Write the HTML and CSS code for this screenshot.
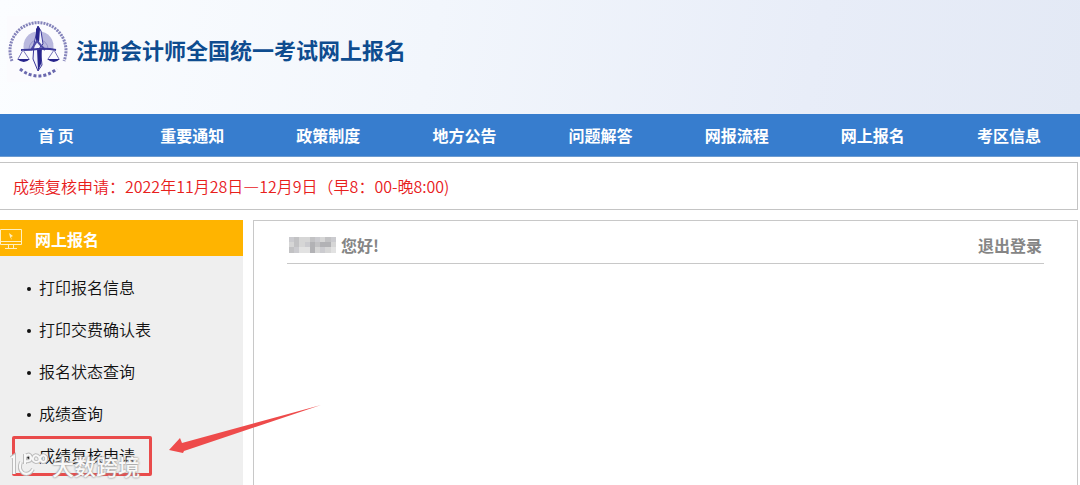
FILE: index.html
```html
<!DOCTYPE html>
<html lang="zh-CN">
<head>
    <meta charset="UTF-8">
    <meta name="viewport" content="width=device-width, initial-scale=1.0">
    <title>注册会计师全国统一考试网上报名</title>
    <link rel="stylesheet" href="styles.css">
</head>
<body>
    <header class="header">
        <svg class="logo" width="64" height="66" viewBox="0 0 64 66" fill="none">
            <rect width="64" height="66" fill="#fbfbfe"/>
            <!-- 外圈 -->
            <path d="M5 45A28 28 0 1 1 57 45" stroke="#8483ba" stroke-width="3" stroke-dasharray="2 1"/>
            <path d="M13 53Q31 67 50 53" stroke="#6a68ae" stroke-width="3" stroke-dasharray="3 2"/>
            <path d="M17 34A15 15 0 1 1 46 34Z" fill="#b9b8de"/>
            <path d="M22 33A9 9 0 1 1 41 33" stroke="#9493ca"/>
            <!-- 天平 -->
            <path d="M31 10L34 15L36 28L33 31L35 49L31 55L26 43L27 28Z" fill="#f2f2fc" stroke="#3b389a"/>
            <path d="M31 10L33 13L32 26L29 26L29 13ZM30 32H35L34 48L31 55Z" fill="#28258c"/>
            <path d="M24 34L30 25L38 34" stroke="#4f4ca6" stroke-width="2"/>
            <path d="M14 34Q24 34 31 33Q40 32 49 34" stroke="#3b389a" stroke-width="2"/>
            <path d="M16 34L11 43M16 34L22 43M47 34L41 43M47 34L52 43" stroke="#7472b8"/>
            <path d="M10 43H23Q17 49 10 43ZM40 43H53Q47 49 40 43Z" fill="#28258c"/>
        </svg>
        <h1>注册会计师全国统一考试网上报名</h1>
    </header>

    <nav class="nav">
        <a href="#">首 页</a>
        <a href="#">重要通知</a>
        <a href="#">政策制度</a>
        <a href="#">地方公告</a>
        <a href="#">问题解答</a>
        <a href="#">网报流程</a>
        <a href="#">网上报名</a>
        <a href="#">考区信息</a>
    </nav>

    <p class="notice">成绩复核申请：2022年11月28日—12月9日（早8：00-晚8:00)</p>

    <div class="main">
        <aside class="sidebar">
            <h2>
                <svg width="23" height="22" viewBox="0 0 23 22" fill="none" stroke="#fff0c0">
                    <path d="M0.500 1.500H21.500V16.500H0.500ZM0 13.500H21M8.500 17V20M13.500 17V20M5 20.500H17"/>
                    <path d="M9 5L13 8L11 9L12 12L10 9Z" fill="#fff0c0" stroke="none"/>
                </svg>
                网上报名
            </h2>
            <ul>
                <li><a href="#">打印报名信息</a></li>
                <li><a href="#">打印交费确认表</a></li>
                <li><a href="#">报名状态查询</a></li>
                <li><a href="#">成绩查询</a></li>
                <li class="marked"><a href="#">成绩复核申请</a></li>
            </ul>
        </aside>

        <section class="content">
            <div class="user-bar">
                <span class="user">
                    <svg width="47" height="16" viewBox="0 0 47 16">
                        <rect width="47" height="16" fill="#d6d6d6"/>
                        <path d="M0 0H5V5H0ZM5 10H10V16H5ZM16 5H21V10H16ZM26 0H31V5H26ZM31 10H36V16H31ZM42 0H47V5H42Z" fill="#cbcbcf"/>
                        <path d="M5 0H10V10H5ZM0 10H5V16H0ZM21 0H26V5H21ZM26 5H31V10H26ZM36 0H42V5H36Z" fill="#c2c2c4"/>
                        <path d="M21 5H26V16H21ZM31 5H36V10H31ZM36 5H42V10H36Z" fill="#b2b2b5"/>
                        <path d="M10 10H21V16H10ZM42 10H47V16H42Z" fill="#e2e2e2"/>
                    </svg>
                    您好!
                </span>
                <a href="#">退出登录</a>
            </div>
        </section>

        <svg class="arrow" width="154" height="50" viewBox="0 0 154 50">
            <path d="M153 1L16 47L15 49L1 46L12 34L14 39Q80 21 153 1Z" fill="#ee4b4b"/>
        </svg>

        <div class="watermark">
            <svg width="40" height="28" viewBox="0 0 40 28" fill="none">
                <g stroke="#bdbdbd" stroke-width="4">
                    <path d="M2 7L5 5V23M24 18Q20 25 14 22Q9 18 12 11M16 3V13M16 6Q20 1 22 6Q23 11 16 10M24 7Q26 2 30 6Q32 11 27 11Q23 10 24 7M31 7Q34 2 37 6Q38 11 34 11Q31 10 31 7"/>
                </g>
                <g stroke="#f8f8f8" stroke-width="2">
                    <path d="M2 7L5 5V23M24 18Q20 25 14 22Q9 18 12 11M16 3V13M16 6Q20 1 22 6Q23 11 16 10M24 7Q26 2 30 6Q32 11 27 11Q23 10 24 7M31 7Q34 2 37 6Q38 11 34 11Q31 10 31 7"/>
                </g>
            </svg>
            <span>大数跨境</span>
        </div>
    </div>
</body>
</html>
```
FILE: styles.css
```css
*,
*::before,
*::after {
    box-sizing: border-box;
}

body {
    margin: 0;
    min-height: 100vh;
    display: flex;
    flex-direction: column;
    font-family: "Noto Sans CJK SC", sans-serif;
    font-size: 16px;
    background-color: #fff;
}

a {
    color: inherit;
    text-decoration: none;
}

.header {
    display: flex;
    align-items: center;
    height: 114px;
    padding: 0 7px 16px;
    gap: 5px;
    background: linear-gradient(100deg, #fbfdff 0%, #f2f6fc 40%, #e8edf8 75%, #e3e9f5 100%);
}

.header h1 {
    margin: 0;
    font-size: 22px;
    font-weight: bold;
    color: #0e4c8f;
}

.nav {
    display: grid;
    grid-template-columns: repeat(8, 1fr);
    height: 43px;
    margin-left: -12px;
    padding-right: 3px;
    line-height: 43px;
    background-color: #377dce;
    border-bottom: 1px solid #6c9bd0;
    color: #fff;
    font-weight: bold;
    text-align: center;
}

.notice {
    margin: 5px 2px 0 0;
    padding: 0 13px;
    line-height: 46px;
    border: 1px solid #c4c4c4;
    border-left: none;
    color: #e8201c;
    font-weight: 350;
}

.main {
    position: relative;
    flex: 1;
    display: flex;
    gap: 10px;
    margin-top: 10px;
    padding-right: 2px;
}

.sidebar {
    width: 243px;
    background-color: #efefef;
}

.sidebar h2 {
    display: flex;
    align-items: center;
    gap: 12px;
    height: 36px;
    margin: 0;
    padding-top: 2px;
    background-color: #ffb400;
    color: #fff;
    font-size: 16px;
}

.sidebar ul {
    list-style: none;
    margin: 0;
    padding: 10px 0 8px;
}

.sidebar li {
    position: relative;
    display: flex;
    align-items: center;
    gap: 8px;
    height: 42px;
    padding-left: 27px;
    color: #111;
    font-weight: 350;
}

.sidebar li::before {
    content: "";
    width: 4px;
    height: 4px;
    margin-top: 4px;
    border-radius: 50%;
    background-color: #111;
}

.sidebar .marked::after {
    content: "";
    position: absolute;
    left: 12px;
    top: 2px;
    width: 140px;
    height: 40px;
    border: 3px solid #e94b4b;
    border-radius: 2px;
}

.content {
    flex: 1;
    padding: 0 33px;
    border: 1px solid #c8c8c8;
    border-bottom: none;
}

.user-bar {
    display: flex;
    justify-content: space-between;
    align-items: center;
    height: 43px;
    padding: 5px 2px 0;
    border-bottom: 1px solid #c8c8c8;
    color: #858585;
    font-weight: bold;
}

.user {
    display: flex;
    align-items: center;
    gap: 5px;
}

.arrow {
    position: absolute;
    left: 168px;
    top: 184px;
}

.watermark {
    position: absolute;
    left: 9px;
    bottom: 6px;
    display: flex;
    align-items: center;
    gap: 3px;
    color: #f8f8f8;
    font-size: 22px;
    font-weight: 500;
    line-height: 28px;
    text-shadow: 0 0 2px #999, 0 0 2px #999;
    pointer-events: none;
}
```
